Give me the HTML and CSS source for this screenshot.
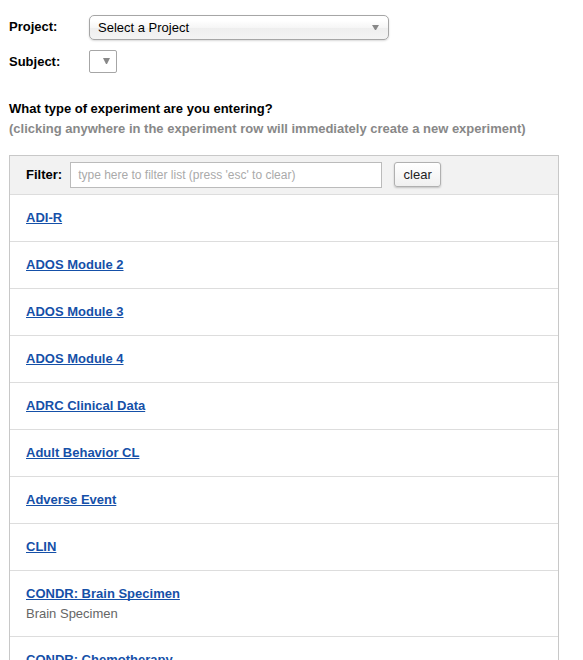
FILE: index.html
```html
<!DOCTYPE html>
<html lang="en">
<head>
<meta charset="utf-8">
<title>New Experiment</title>
<link rel="stylesheet" href="styles.css">
</head>
<body>
<main class="page">
  <form class="entry">
    <div class="field">
      <label class="field-label" for="project">Project:</label>
      <span class="picker picker-project">
        <select id="project"><option>Select a Project</option></select>
        <svg class="caret" viewBox="0 0 7 6" aria-hidden="true"><path d="M0 0h7L4 5H3z"/></svg>
      </span>
    </div>
    <div class="field">
      <label class="field-label" for="subject">Subject:</label>
      <span class="picker picker-subject">
        <select id="subject"></select>
        <svg class="caret" viewBox="0 0 7 6" aria-hidden="true"><path d="M0 0h7L4 6H3z"/></svg>
      </span>
    </div>
  </form>
  <header class="question">
    <h1>What type of experiment are you entering?</h1>
    <p>(clicking anywhere in the experiment row will immediately create a new experiment)</p>
  </header>
  <section class="panel">
    <div class="filter">
      <label for="filter">Filter:</label>
      <input id="filter" type="text" placeholder="type here to filter list (press 'esc' to clear)">
      <button type="button">clear</button>
    </div>
    <ul class="experiments">
      <li><a href="#">ADI-R</a></li>
      <li><a href="#">ADOS Module 2</a></li>
      <li><a href="#">ADOS Module 3</a></li>
      <li><a href="#">ADOS Module 4</a></li>
      <li><a href="#">ADRC Clinical Data</a></li>
      <li><a href="#">Adult Behavior CL</a></li>
      <li><a href="#">Adverse Event</a></li>
      <li><a href="#">CLIN</a></li>
      <li><a href="#">CONDR: Brain Specimen</a><p>Brain Specimen</p></li>
      <li><a href="#">CONDR: Chemotherapy</a></li>
    </ul>
  </section>
</main>
</body>
</html>
```
FILE: styles.css
```css
* {
  box-sizing: border-box;
}

html {
  scrollbar-width: none;
}

body {
  margin: 0;
  background: #fff;
  color: #000;
  font: 13px/20px "Liberation Sans", Arial, sans-serif;
}

h1,
p,
ul {
  margin: 0;
  padding: 0;
}

.page {
  padding: 15px 24px 0 9px;
}

.entry {
  display: flex;
  flex-direction: column;
  gap: 10px;
}

.field {
  display: flex;
}

.field-label {
  width: 80px;
  line-height: 24px;
  font-weight: bold;
}

.picker {
  position: relative;
  display: flex;
}

.picker select {
  width: 100%;
  margin: 0;
  padding: 0 24px 0 8px;
  appearance: none;
  border: 1px solid #a6a6a6;
  border-radius: 2px;
  background: #fff;
  color: #000;
  font: inherit;
}

.picker-project {
  width: 300px;
  height: 25px;
}

.picker-project select {
  border-radius: 5px;
  background: linear-gradient(#fff 20%, #f6f6f6 50%, #eee 52%, #f4f4f4 100%);
  box-shadow: 0 1px 2px rgba(0, 0, 0, 0.15);
}

.picker-subject {
  width: 28px;
  height: 23px;
}

.picker-subject select {
  padding: 0;
}

.caret {
  position: absolute;
  top: 10px;
  right: 10px;
  width: 7px;
  height: 6px;
  fill: #888;
  pointer-events: none;
}

.picker-subject .caret {
  top: 8px;
  right: 7px;
}

.question {
  margin: 25px 0 16px;
}

.question h1 {
  font-size: 13px;
}

.question p {
  color: #888;
  font-weight: bold;
}

.panel {
  border: 1px solid #c8c8c8;
}

.filter {
  display: flex;
  align-items: flex-start;
  padding: 6px 16px;
  border-bottom: 1px solid #ddd;
  background: #f2f2f2;
}

.filter label {
  line-height: 26px;
  font-weight: bold;
}

.filter input {
  width: 312px;
  height: 26px;
  margin: 0 12px 0 8px;
  padding: 0 7px;
  border: 1px solid #bbb;
  background: #fff;
  font: 12px "Liberation Sans", Arial, sans-serif;
}

.filter input::placeholder {
  color: #aaa;
}

.filter button {
  width: 47px;
  height: 25px;
  padding: 0;
  border: 1px solid #b0b0b0;
  border-radius: 3px;
  background: linear-gradient(#fff, #f0f0f0);
  box-shadow: 0 1px 2px rgba(0, 0, 0, 0.2);
  color: #222;
  font: inherit;
}

.experiments {
  list-style: none;
}

.experiments li {
  padding: 13px 16px;
  border-bottom: 1px solid #ddd;
}

.experiments a {
  display: block;
  color: #1550a8;
  font-weight: bold;
  text-decoration-thickness: 1px;
  text-decoration-skip-ink: none;
}

.experiments p {
  color: #666;
  line-height: 19px;
}
```
